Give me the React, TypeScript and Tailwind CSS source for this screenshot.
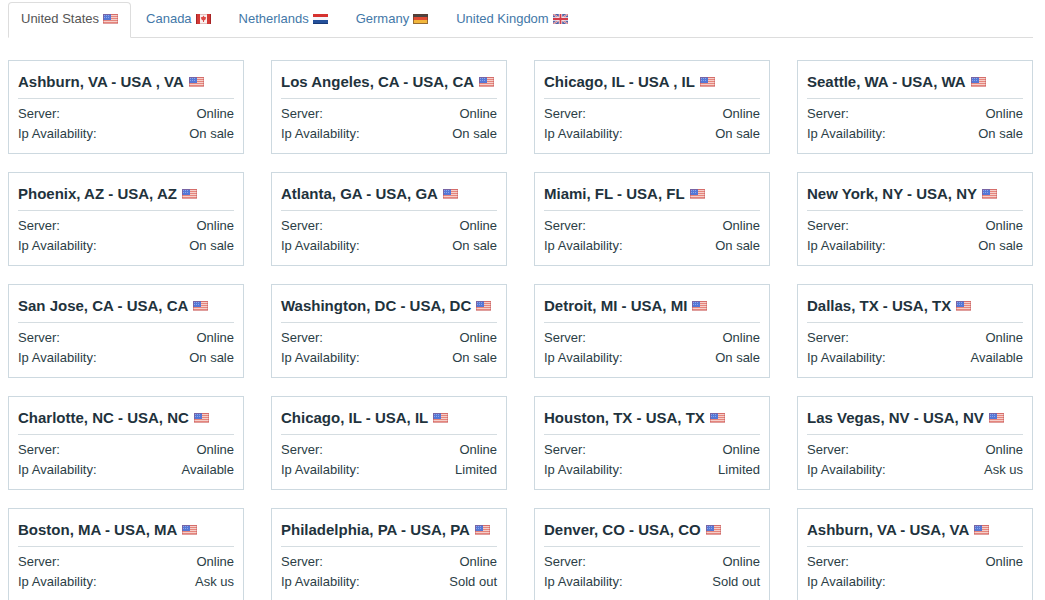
type Country = 'us' | 'ca' | 'nl' | 'de' | 'gb';

const tabs: { label: string; country: Country }[] = [
  { label: 'United States', country: 'us' },
  { label: 'Canada', country: 'ca' },
  { label: 'Netherlands', country: 'nl' },
  { label: 'Germany', country: 'de' },
  { label: 'United Kingdom', country: 'gb' },
];

const locations: { name: string; availability: string }[] = [
  { name: 'Ashburn, VA - USA , VA', availability: 'On sale' },
  { name: 'Los Angeles, CA - USA, CA', availability: 'On sale' },
  { name: 'Chicago, IL - USA , IL', availability: 'On sale' },
  { name: 'Seattle, WA - USA, WA', availability: 'On sale' },
  { name: 'Phoenix, AZ - USA, AZ', availability: 'On sale' },
  { name: 'Atlanta, GA - USA, GA', availability: 'On sale' },
  { name: 'Miami, FL - USA, FL', availability: 'On sale' },
  { name: 'New York, NY - USA, NY', availability: 'On sale' },
  { name: 'San Jose, CA - USA, CA', availability: 'On sale' },
  { name: 'Washington, DC - USA, DC', availability: 'On sale' },
  { name: 'Detroit, MI - USA, MI', availability: 'On sale' },
  { name: 'Dallas, TX - USA, TX', availability: 'Available' },
  { name: 'Charlotte, NC - USA, NC', availability: 'Available' },
  { name: 'Chicago, IL - USA, IL', availability: 'Limited' },
  { name: 'Houston, TX - USA, TX', availability: 'Limited' },
  { name: 'Las Vegas, NV - USA, NV', availability: 'Ask us' },
  { name: 'Boston, MA - USA, MA', availability: 'Ask us' },
  { name: 'Philadelphia, PA - USA, PA', availability: 'Sold out' },
  { name: 'Denver, CO - USA, CO', availability: 'Sold out' },
  { name: 'Ashburn, VA - USA, VA', availability: '' },
];

function FlagArt({ country }: { country: Country }) {
  switch (country) {
    case 'us':
      return (
        <>
          <rect width="15" height="10" fill="#f5cfca" />
          <path d="M0 0.5H15M0 2.5H15M0 4.5H15M0 6.5H15M0 8.5H15" stroke="#e5857c" />
          <rect width="8" height="6" fill="#5577d6" />
          <path d="M1 1.5H7M1 3.5H7" stroke="#8ca6ea" strokeDasharray="1 1" />
          <rect x="0.5" y="0.5" width="14" height="9" fill="none" stroke="#b8434a" strokeOpacity="0.35" />
        </>
      );
    case 'ca':
      return (
        <>
          <rect width="15" height="10" fill="#faf0ef" />
          <path d="M0 0H4V10H0ZM11 0H15V10H11Z" fill="#d23a36" />
          <path d="M7.5 1.6L8.5 3L10.2 3.3L9.5 5.6L8 6.4V8H7V6.4L5.5 5.6L4.8 3.3L6.5 3Z" fill="#dc4a46" />
          <path d="M0.5 0V10M14.5 0V10" stroke="#a72325" />
          <path d="M4 0.5H11M4 9.5H11" stroke="#e3c0be" />
        </>
      );
    case 'nl':
      return (
        <>
          <rect width="15" height="10" fill="#f5f6fa" />
          <rect width="15" height="3" fill="#d6322f" />
          <rect y="6" width="15" height="4" fill="#24509a" />
          <path d="M0 9.5H15" stroke="#173a78" />
        </>
      );
    case 'de':
      return (
        <>
          <rect width="15" height="10" fill="#e04a32" />
          <rect width="15" height="3" fill="#4c4340" />
          <rect y="6" width="15" height="4" fill="#f2b73c" />
          <rect x="0.5" y="0.5" width="14" height="9" fill="none" stroke="#5c3a2c" strokeOpacity="0.6" />
        </>
      );
    case 'gb':
      return (
        <>
          <rect width="15" height="10" fill="#5263a6" />
          <path d="M0 0L15 10M15 0L0 10" stroke="#ecdfe9" strokeWidth="1.8" />
          <path d="M0 0L15 10M15 0L0 10" stroke="#d4545c" strokeWidth="0.8" />
          <path d="M7.5 0V10M0 5H15" stroke="#faf3f5" strokeWidth="3.4" />
          <path d="M7.5 0V10M0 5H15" stroke="#d33c48" strokeWidth="1.8" />
        </>
      );
  }
}

function Flag({ country }: { country: Country }) {
  return (
    <svg viewBox="0 0 15 10" aria-hidden="true" className="h-[10px] w-[15px] shrink-0 overflow-hidden">
      <FlagArt country={country} />
    </svg>
  );
}

function CountryTabs({ active }: { active: Country }) {
  return (
    <nav aria-label="Countries" className="flex gap-0.5 border-b border-[#dddddd] text-[13px] leading-5">
      {tabs.map(({ label, country }) => (
        <a
          key={country}
          href={`#${country}`}
          aria-current={country === active ? 'page' : undefined}
          className={
            country === active
              ? '-mb-px flex items-center gap-1 rounded-t border border-[#dddddd] border-b-white bg-white px-3 pt-1.5 pb-2 text-[#555555]'
              : '-mb-px flex items-center gap-1 rounded-t border border-transparent px-3 pt-1.5 pb-2 text-[#4378a8]'
          }
        >
          {label}
          <Flag country={country} />
        </a>
      ))}
    </nav>
  );
}

function LocationCard({ name, availability }: { name: string; availability: string }) {
  return (
    <article className="border border-[#cdd9e0] px-[9px] pt-[11px] pb-[9px] text-[13px] leading-5 text-[#2b3e46]">
      <h2 className="mb-[5px] flex items-center gap-[5px] border-b border-[#d5dde1] pb-1.5 text-[15px] leading-5 font-bold whitespace-nowrap text-[#1f333d]">
        {name}
        <Flag country="us" />
      </h2>
      <dl>
        <div className="flex justify-between">
          <dt>Server:</dt>
          <dd>Online</dd>
        </div>
        <div className="flex justify-between">
          <dt>Ip Availability:</dt>
          <dd>{availability}</dd>
        </div>
      </dl>
    </article>
  );
}

export default function App() {
  return (
    <main className="bg-white pt-0.5 pr-3 pb-6 pl-2 font-['Liberation_Sans',Arial,sans-serif]">
      <CountryTabs active="us" />
      <section aria-label="United States" className="mt-[22px] grid grid-cols-4 gap-x-[27px] gap-y-[18px]">
        {locations.map((location) => (
          <LocationCard key={location.name} {...location} />
        ))}
      </section>
    </main>
  );
}
